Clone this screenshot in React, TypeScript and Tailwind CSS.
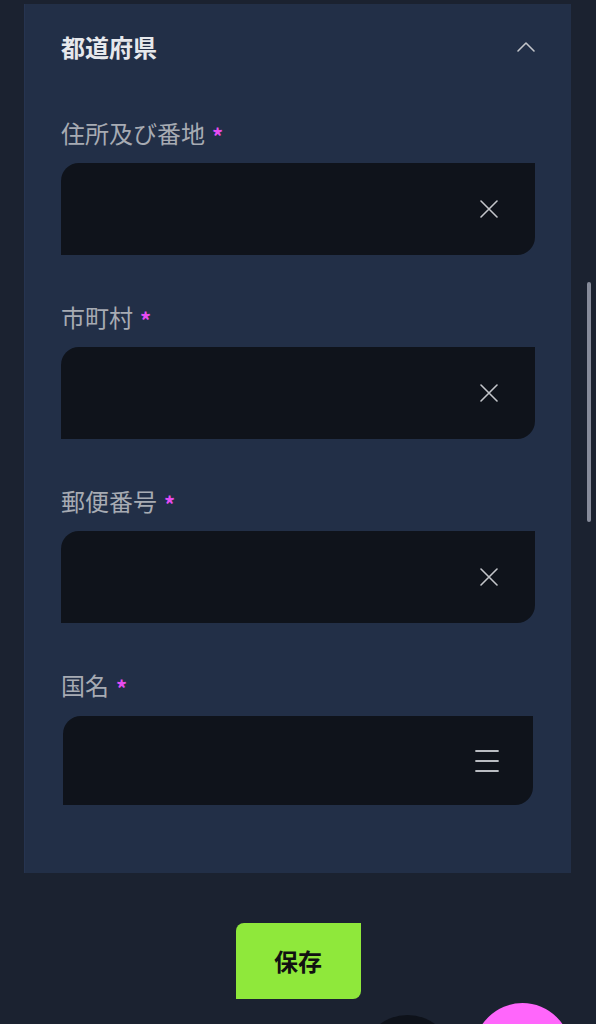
import React from 'react';

// Address form panel — a collapsible "都道府県" section with four required
// fields, a save button and two floating action circles at the bottom edge.

type Field = { label: string; kind: 'clear' | 'select' };

const fields: Field[] = [
  { label: '住所及び番地', kind: 'clear' },
  { label: '市町村', kind: 'clear' },
  { label: '郵便番号', kind: 'clear' },
  { label: '国名', kind: 'select' },
];

const jp = { fontFamily: '"Noto Sans CJK JP", "Noto Sans", sans-serif' };

function ClearIcon() {
  return (
    <svg width="18" height="18" viewBox="0 0 18 18" fill="none" aria-hidden>
      <path d="M1 1 L17 17 M17 1 L1 17" stroke="#c3c5ca" strokeWidth="1.6" strokeLinecap="round" />
    </svg>
  );
}

function MenuIcon() {
  return (
    <svg width="24" height="24" viewBox="0 0 24 24" fill="none" aria-hidden>
      <path d="M1 2 H23 M1 12 H23 M1 22 H23" stroke="#b9bcc2" strokeWidth="1.8" strokeLinecap="round" />
    </svg>
  );
}

function FieldRow({ field, index }: { field: Field; index: number }) {
  const select = field.kind === 'select';
  return (
    <div className={index === 0 ? 'mt-[50px]' : 'mt-[44px]'}>
      <div className="flex items-start h-[36px] text-[24px] leading-[36px] text-[#a7abb3]">
        <span>{field.label}</span>
        <span className="ml-[7px] mt-[2px] text-[22px] leading-[36px] font-bold text-[#e64cf2]">*</span>
      </div>
      <div
        className={
          select
            ? 'mt-[13px] mx-[2px] h-[89px] bg-[#0f131b] rounded-tl-[18px] rounded-br-[18px] flex items-center justify-end pr-[34px]'
            : 'mt-[12px] h-[92px] bg-[#0f131b] rounded-tl-[18px] rounded-br-[18px] flex items-center justify-end pr-[37px]'
        }
      >
        {select ? <MenuIcon /> : <ClearIcon />}
      </div>
    </div>
  );
}

export default function App() {
  return (
    <div className="relative h-[1024px] w-full overflow-hidden bg-[#1b2230]" style={jp}>
      {/* form panel */}
      <div className="mt-[4px] ml-[24px] w-[547px] bg-[#222f47] border-l border-[#263450] pl-[36px] pr-[36px] pt-[25px] pb-[68px]">
        <div className="flex items-center justify-between h-[36px]">
          <h2 className="text-[24px] leading-[36px] font-bold text-[#e6e8ec]">都道府県</h2>
          <svg width="20" height="12" viewBox="0 0 20 12" fill="none" className="mr-[-1px]" aria-hidden>
            <path d="M2 10 L10 2 L18 10" stroke="#c3c5ca" strokeWidth="1.6" strokeLinecap="round" strokeLinejoin="round" />
          </svg>
        </div>

        {fields.map((f, i) => (
          <FieldRow key={f.label} field={f} index={i} />
        ))}
      </div>

      {/* save */}
      <div className="mt-[50px] flex justify-center">
        <button className="w-[125px] h-[76px] bg-[#8fe83b] rounded-tl-[8px] rounded-br-[8px] text-[24px] font-bold text-[#111111]">
          保存
        </button>
      </div>

      {/* scrollbar */}
      <span aria-hidden className="absolute left-[587px] top-[282px] w-[4px] h-[240px] rounded-full bg-[#868b9a]" />

      {/* floating circles */}
      <span aria-hidden className="absolute left-[361px] top-[1015px] w-[93px] h-[93px] rounded-full bg-[#0e121a]" />
      <span aria-hidden className="absolute left-[474px] top-[1003px] w-[97px] h-[97px] rounded-full bg-[#ff66fb]" />
    </div>
  );
}
